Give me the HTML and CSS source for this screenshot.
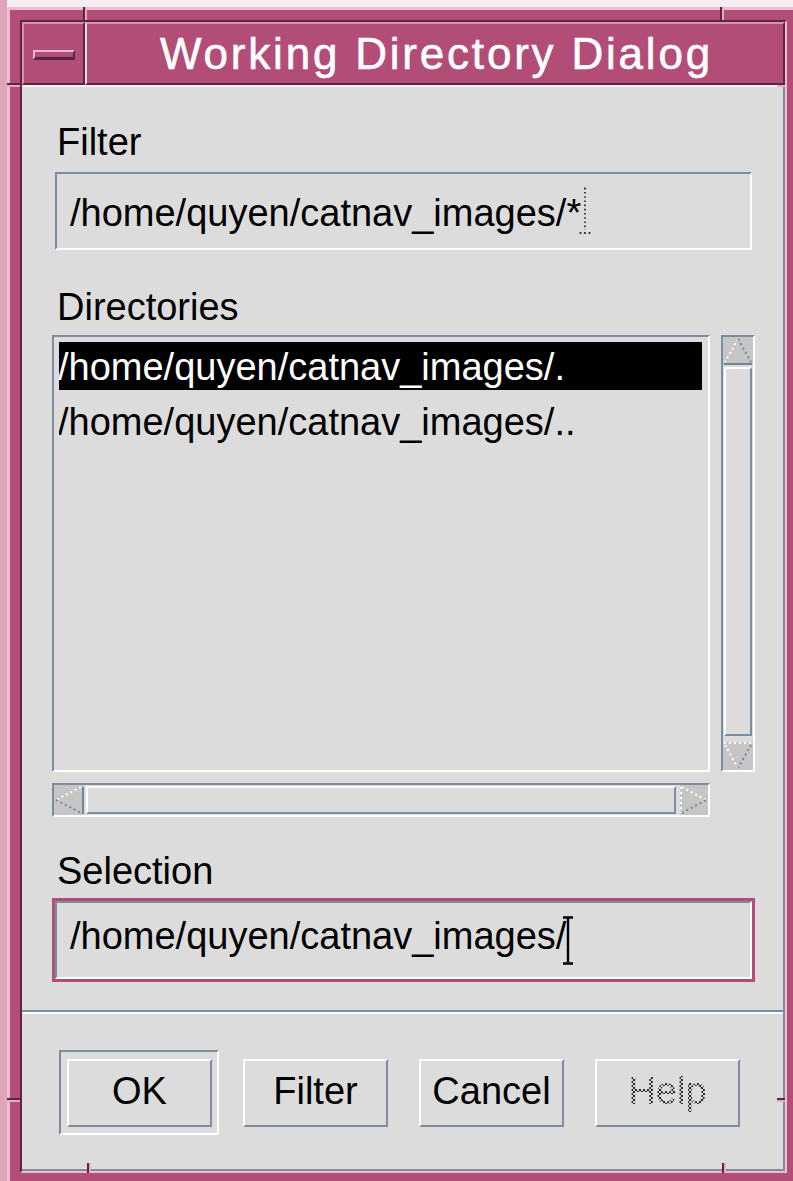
FILE: index.html
```html
<!DOCTYPE html>
<html>
<head>
<meta charset="utf-8">
<title>Working Directory Dialog</title>
<link rel="stylesheet" href="styles.css">
</head>
<body>
<div class="window">
  <!-- resize-handle notches in the window frame -->
  <span class="notch notch-v notch-top-a"></span>
  <span class="notch notch-v notch-top-b"></span>
  <span class="notch notch-v notch-bot-a"></span>
  <span class="notch notch-v notch-bot-b"></span>
  <span class="notch notch-h notch-left-a"></span>
  <span class="notch notch-h notch-left-b"></span>
  <span class="notch notch-h notch-right-a"></span>
  <span class="notch notch-h notch-right-b"></span>

  <div class="inner">
    <div class="titlebar">
      <div class="menu-btn"><span class="minus"></span></div>
      <div class="title">Working Directory Dialog</div>
    </div>

    <div class="client">
      <div class="form">
        <div class="label">Filter</div>
        <div class="field">
          <div class="field-box">
            <span class="value">/home/quyen/catnav_images/*</span>
            <svg class="caret-idle" width="12" height="48" viewBox="0 0 12 48">
              <circle cx="6" cy="1.5" r="1.1" fill="#222"/>
              <path d="M6 5 V43" stroke="#222" stroke-width="1.6" stroke-dasharray="1.6 2.6"/>
              <circle cx="1.5" cy="46" r="1.1" fill="#222"/>
              <circle cx="6" cy="46" r="1.1" fill="#222"/>
              <circle cx="10.5" cy="46" r="1.1" fill="#222"/>
            </svg>
          </div>
        </div>

        <div class="label spaced">Directories</div>
        <div class="lists">
          <div class="list">
            <div class="item selected">/home/quyen/catnav_images/.</div>
            <div class="item">/home/quyen/catnav_images/..</div>
          </div>

          <div class="vscroll">
            <svg class="arrow" width="30" height="28" viewBox="0 0 30 28">
              <rect width="30" height="28" fill="#c6c6c6"/>
              <path d="M15 2 L2 25" stroke="#fff" stroke-width="2" stroke-dasharray="2 3"/>
              <path d="M15 2 L28 25" stroke="#70849a" stroke-width="2" stroke-dasharray="2 3"/>
              <path d="M1 27 H29" stroke="#70849a" stroke-width="2"/>
            </svg>
            <div class="trough trough-v"><div class="slider"></div></div>
            <svg class="arrow" width="30" height="28" viewBox="0 0 30 28">
              <rect width="30" height="28" fill="#c6c6c6"/>
              <path d="M1 1 H29" stroke="#fff" stroke-width="2" stroke-dasharray="2 3"/>
              <path d="M2 3 L15 26" stroke="#fff" stroke-width="2" stroke-dasharray="2 3"/>
              <path d="M28 3 L15 26" stroke="#70849a" stroke-width="2" stroke-dasharray="2 3"/>
            </svg>
          </div>

          <div class="hscroll">
            <svg class="arrow" width="30" height="30" viewBox="0 0 30 30">
              <rect width="30" height="30" fill="#c6c6c6"/>
              <path d="M27 2 L2 15" stroke="#fff" stroke-width="2" stroke-dasharray="2 3"/>
              <path d="M2 15 L27 28" stroke="#70849a" stroke-width="2" stroke-dasharray="2 3"/>
              <path d="M29 2 V29" stroke="#70849a" stroke-width="2"/>
            </svg>
            <div class="trough trough-h"><div class="slider"></div></div>
            <svg class="arrow" width="28" height="30" viewBox="0 0 28 30">
              <rect width="28" height="30" fill="#c6c6c6"/>
              <path d="M1 2 V28" stroke="#fff" stroke-width="2" stroke-dasharray="2 3"/>
              <path d="M2 2 L26 15" stroke="#fff" stroke-width="2" stroke-dasharray="2 3"/>
              <path d="M2 28 L26 15" stroke="#70849a" stroke-width="2" stroke-dasharray="2 3"/>
            </svg>
          </div>
        </div>

        <div class="label spaced">Selection</div>
        <div class="field focused">
          <div class="field-box">
            <span class="value">/home/quyen/catnav_images/</span>
            <svg class="caret" width="12" height="49" viewBox="0 0 12 49">
              <path d="M1 1.5 H11 M1 47.5 H11 M6 1.5 V47.5" stroke="#000" stroke-width="2.4" fill="none"/>
            </svg>
          </div>
        </div>
      </div>

      <div class="separator"></div>

      <div class="buttons">
        <button class="btn default">OK</button>
        <button class="btn">Filter</button>
        <button class="btn">Cancel</button>
        <button class="btn disabled">Help</button>
      </div>
    </div>
  </div>
</div>
</body>
</html>
```

FILE: styles.css
```css
/* Motif-style file selection box inside an mwm frame */
:root {
  --frame: #b24d78;
  --frame-light: #ecbcd0;
  --frame-dark: #5e2541;
  --bg: #dcdcdc;
  --shade: #7b8da0;
  --lite: #ffffff;
}

html, body {
  margin: 0;
  padding: 0;
}

body {
  width: 793px;
  height: 1181px;
  overflow: hidden;
  background: linear-gradient(to right, #dfa3bc 7px, #f7ecf1 7px);
  font-family: "Liberation Sans", Arial, sans-serif;
}

/* ---------- window frame ---------- */
.window {
  position: relative;
  box-sizing: border-box;
  width: 786px;
  height: 1174px;
  margin: 7px 0 0 7px;
  padding: 10px 6px 8px 10px;
  background: var(--frame);
  border-top: 3px solid var(--frame-light);
  border-left: 3px solid var(--frame-light);
  display: flex;
}

.notch {
  position: absolute;
  background: var(--frame-dark);
}
.notch-v { width: 2px; box-shadow: 2px 0 0 #e6aac2; }
.notch-h { height: 2px; box-shadow: 0 2px 0 #e6aac2; }
.notch-top-a { left: 73px; top: -3px; height: 13px; }
.notch-top-b { left: 710px; top: -3px; height: 13px; }
.notch-bot-a { left: 77px; top: 1153px; height: 10px; }
.notch-bot-b { left: 712px; top: 1153px; height: 10px; }
.notch-left-a { left: -3px; top: 73px; width: 13px; }
.notch-left-b { left: -3px; top: 1088px; width: 13px; }
.notch-right-a { left: 767px; top: 73px; width: 8px; }
.notch-right-b { left: 767px; top: 1088px; width: 8px; }

.inner {
  flex: 1;
  display: flex;
  flex-direction: column;
  border-top: 2px solid var(--frame-dark);
  border-left: 2px solid var(--frame-dark);
  border-right: 2px solid var(--frame-light);
  border-bottom: 2px solid var(--frame-light);
}

/* ---------- title bar ---------- */
.titlebar {
  display: flex;
  height: 63px;
}

.menu-btn {
  box-sizing: border-box;
  width: 63px;
  border-top: 2px solid #d98fb0;
  border-left: 2px solid #d98fb0;
  border-right: 2px solid var(--frame-dark);
  border-bottom: 2px solid var(--frame-dark);
  display: flex;
  align-items: center;
  justify-content: center;
}

.minus {
  box-sizing: border-box;
  width: 42px;
  height: 10px;
  margin: 2px 0 0 1px;
  background: var(--frame);
  border-top: 2px solid var(--frame-light);
  border-left: 2px solid var(--frame-light);
  border-right: 2px solid var(--frame-dark);
  border-bottom: 3px solid var(--frame-dark);
}

.title {
  flex: 1;
  box-sizing: border-box;
  border-top: 2px solid #d98fb0;
  border-left: 2px solid #f4dfe8;
  border-right: 2px solid var(--frame-dark);
  border-bottom: 2px solid var(--frame-dark);
  color: #fff;
  font-size: 44px;
  letter-spacing: 2.8px;
  padding-left: 3px;
  -webkit-text-stroke: 0.6px #fff;
  display: flex;
  align-items: center;
  justify-content: center;
  white-space: nowrap;
}

/* ---------- client area ---------- */
.client {
  flex: 1;
  display: flex;
  flex-direction: column;
  background: var(--bg);
  border-top: 2px solid #f6eff3;
  border-right: 2px solid var(--shade);
  border-bottom: 2px solid var(--shade);
  color: #000;
}

.form {
  display: flex;
  flex-direction: column;
  padding: 33px 28px 0 30px;
}

.label {
  font-size: 38px;
  line-height: 44px;
  padding-left: 5px;
}
.label.spaced { margin-top: 32px; }

.field {
  box-sizing: border-box;
  height: 84px;
  margin-top: 5px;
  border: 3px solid var(--bg);
}
.field.focused { border-color: var(--frame); }

.field-box {
  box-sizing: border-box;
  height: 100%;
  display: flex;
  align-items: center;
  padding-left: 13px;
  border-top: 2px solid var(--shade);
  border-left: 2px solid var(--shade);
  border-right: 2px solid var(--lite);
  border-bottom: 2px solid var(--lite);
  font-size: 38px;
  white-space: nowrap;
}

.value { margin-top: 4px; }
.focused .value { margin-top: 0; margin-bottom: 8px; }

.caret-idle { margin-left: -2px; }
.caret { margin-left: -4px; }

/* ---------- list + scrollbars ---------- */
.lists {
  margin-top: 6px;
  display: grid;
  grid-template-columns: 658px 34px;
  grid-template-rows: 437px 34px;
  column-gap: 11px;
  row-gap: 11px;
}

.list,
.vscroll,
.hscroll {
  box-sizing: border-box;
  border-top: 2px solid var(--shade);
  border-left: 2px solid var(--shade);
  border-right: 2px solid var(--lite);
  border-bottom: 2px solid var(--lite);
}

.list {
  padding: 5px 6px 0 5px;
  overflow: hidden;
}

.item {
  height: 48px;
  line-height: 50px;
  font-size: 38px;
  white-space: nowrap;
  overflow: hidden;
  text-indent: -1px;
}
.item + .item { margin-top: 7px; }
.item.selected {
  background: #000;
  color: #fff;
}

.vscroll {
  display: flex;
  flex-direction: column;
}
.hscroll {
  display: flex;
}
.arrow { display: block; flex: none; }

.trough {
  flex: 1;
  display: flex;
  box-sizing: border-box;
}
.trough-v { padding: 2px 1px 6px 1px; }
.trough-h { padding: 1px 4px 1px 2px; }

.slider {
  flex: 1;
  box-sizing: border-box;
  border-top: 2px solid var(--lite);
  border-left: 2px solid var(--lite);
  border-right: 2px solid var(--shade);
  border-bottom: 2px solid var(--shade);
}

/* ---------- action area ---------- */
.separator {
  height: 0;
  margin-top: 28px;
  border-top: 2px solid var(--shade);
  border-bottom: 2px solid var(--lite);
}

.buttons {
  display: flex;
  gap: 31px;
  padding: 45px 0 0 45px;
}

.btn {
  position: relative;
  box-sizing: border-box;
  width: 145px;
  height: 68px;
  margin: 0;
  padding: 0 0 3px;
  background: var(--bg);
  border-top: 2px solid var(--lite);
  border-left: 2px solid var(--lite);
  border-right: 2px solid var(--shade);
  border-bottom: 2px solid var(--shade);
  font-family: inherit;
  font-size: 38px;
  color: #000;
}

/* default-button ring */
.btn.default::before {
  content: "";
  position: absolute;
  left: -10px;
  top: -11px;
  right: -9px;
  bottom: -10px;
  border-top: 2px solid var(--shade);
  border-left: 2px solid var(--shade);
  border-right: 2px solid var(--lite);
  border-bottom: 2px solid var(--lite);
}

/* insensitive label drawn with a stipple */
.btn.disabled {
  color: transparent;
  background-image: repeating-conic-gradient(#222 0 25%, transparent 0 50%);
  background-size: 4px 4px;
  -webkit-background-clip: text;
  background-clip: text;
  background-color: var(--bg);
}
```
